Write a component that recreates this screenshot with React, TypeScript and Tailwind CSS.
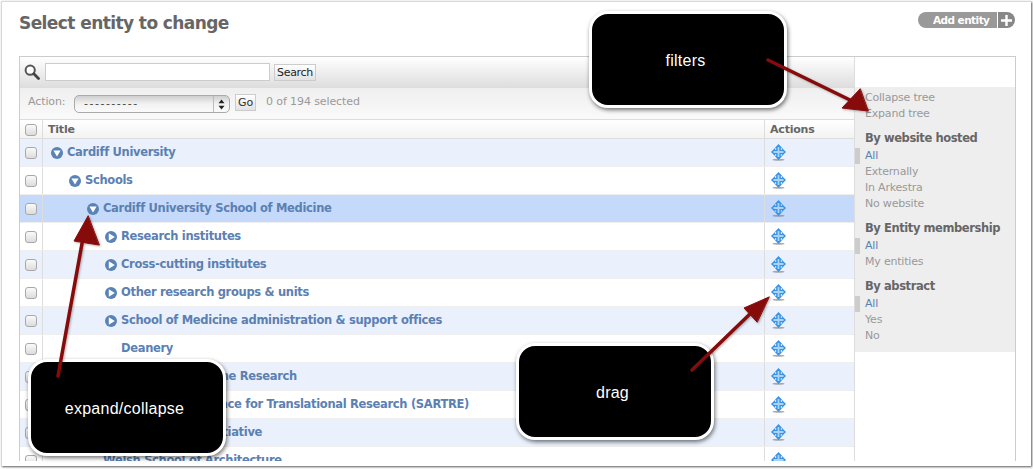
import React from 'react';

const FONT = "font-['DejaVu_Sans',sans-serif]";

type Row = { title: string; pad: number; icon?: 'down' | 'right'; active?: boolean };

const rows: Row[] = [
  { title: 'Cardiff University', pad: 8, icon: 'down' },
  { title: 'Schools', pad: 26, icon: 'down' },
  { title: 'Cardiff University School of Medicine', pad: 44, icon: 'down', active: true },
  { title: 'Research institutes', pad: 62, icon: 'right' },
  { title: 'Cross-cutting institutes', pad: 62, icon: 'right' },
  { title: 'Other research groups & units', pad: 62, icon: 'right' },
  { title: 'School of Medicine administration & support offices', pad: 62, icon: 'right' },
  { title: 'Deanery', pad: 78 },
  { title: 'Institute of Medicine Research', pad: 65 },
  { title: 'South Wales Alliance for Translational Research (SARTRE)', pad: 69 },
  { title: 'Wales Gene Park Initiative', pad: 56 },
  { title: 'Welsh School of Architecture', pad: 60 },
];

const Toggle = ({ dir }: { dir: 'down' | 'right' }) => (
  <svg width="12" height="12" viewBox="0 0 12 12" className="shrink-0 mr-[4px]">
    <circle cx="6" cy="6" r="6" fill="#5a83b5" />
    {dir === 'down' ? <path d="M2.4 3.6h7.2L6 9.6z" fill="#fff" /> : <path d="M3.8 2.2v7.6L9.8 6z" fill="#fff" />}
  </svg>
);

const DragIcon = () => (
  <svg width="15" height="17" viewBox="0 0 15 17">
    <ellipse cx="7.5" cy="15.8" rx="6" ry="1" fill="#777" opacity="0.6" />
    <path
      d="M7.5 0L11.4 4.2H9.8V5.7H11V3.9L15 8L11 12.1V10.3H9.8V11.8H11.4L7.5 16L3.6 11.8H5.2V10.3H4V12.1L0 8L4 3.9V5.7H5.2V4.2H3.6z"
      fill="#3a92e6"
    />
    <path d="M6.6 3h1.8v10H6.6zM2.5 7.1h10v1.8h-10z" fill="#a9d4f7" />
  </svg>
);

const Checkbox = () => (
  <span className="block w-[12px] h-[12px] rounded-[3px] border border-[#a8a8a8] bg-gradient-to-b from-[#fafafa] to-[#dcdcdc]" />
);

const FilterGroup = ({ title, items, className }: { title: string; items: string[]; className?: string }) => (
  <div className={className}>
    <div className="h-[16px] pl-[10px] text-[11.5px] leading-[16px] font-bold text-[#666] tracking-[-0.42px]">{title}</div>
    <ul className="mt-[2px]">
      {items.map((item, i) => (
        <li
          key={item}
          className={`h-[16px] text-[11px] leading-[16px] tracking-[-0.2px] ${
            i === 0 ? 'border-l-[5px] border-[#ccc] pl-[5px] text-[#5b80b2]' : 'pl-[10px] text-[#999]'
          }`}
        >
          {item}
        </li>
      ))}
    </ul>
  </div>
);

const Callout = ({ label, className }: { label: string; className: string }) => (
  <div
    className={`absolute w-[198px] h-[97px] box-border rounded-[19px] border-[3px] border-white bg-black flex items-center justify-center pr-[5px] pt-[2px] text-white text-[16px] tracking-[0.25px] font-['Liberation_Sans',sans-serif] shadow-[1px_2px_4px_rgba(0,0,0,0.55)] ${className}`}
  >
    {label}
  </div>
);

export default function App() {
  return (
    <div className={`relative w-[1033px] h-[469px] overflow-hidden bg-white ${FONT}`}>
      <div className="ml-[1px] mt-[1px] w-[1030px] h-[465px] box-border bg-white border-l border-t border-[#d8d8d8] shadow-[1px_1px_2px_rgba(0,0,0,0.65)] pl-[17px] pr-[16px]">
        <div className="flex items-start justify-between h-[54px]">
          <h1 className="mt-[9px] text-[17px] leading-[24px] font-bold text-[#666] tracking-[-0.58px]">Select entity to change</h1>
          <div className="mt-[10px] flex h-[16px] text-white text-[10.5px] leading-[16px] font-bold tracking-[-0.55px]">
            <span className="w-[79px] pl-[15px] bg-[#999] rounded-l-[8px]">Add entity</span>
            <span className="ml-[1px] w-[17px] bg-[#888] rounded-r-[8px] flex items-center justify-center">
              <svg width="13" height="13" viewBox="0 0 13 13"><path d="M5.3 1h2.4v4.3H12v2.4H7.7V12H5.3V7.7H1V5.3h4.3z" fill="#fff" /></svg>
            </span>
          </div>
        </div>

        <div className="flex w-[997px] h-[405px] box-border border border-b-0 border-[#ccc] overflow-hidden">
          <div className="w-[835px] shrink-0 border-r border-[#ddd]">
            <div className="h-[30px] flex items-center bg-gradient-to-b from-white to-[#dedede] pl-[4px]">
              <svg width="16" height="16" viewBox="0 0 16 16" className="mr-[5px]">
                <circle cx="6.2" cy="6.2" r="4.6" fill="#fff" stroke="#555" strokeWidth="2" />
                <path d="M9.8 9.8L14.5 14.5" stroke="#444" strokeWidth="2.8" strokeLinecap="round" />
              </svg>
              <span className="block w-[225px] h-[18px] bg-white border border-[#ccc]" />
              <span className="ml-[4px] h-[17px] w-[42px] border border-[#ccc] bg-gradient-to-b from-white to-[#e2e2e2] text-[11px] leading-[15px] text-center text-[#222] tracking-[-0.3px]">Search</span>
            </div>
            <div className="h-[32px] flex items-center bg-gradient-to-b from-[#efefef] to-[#fafafa] border-t border-[#ddd] pl-[8px] pb-[2px] text-[11px] text-[#999] tracking-[-0.1px]">
              <span className="w-[46px]">Action:</span>
              <span className="relative mt-[3px] w-[156px] h-[18px] rounded-[5px] border border-[#aaa] bg-gradient-to-b from-[#cfcfcf] via-[#f2f2f2] to-[#fafafa] text-[11px] leading-[16px] pl-[9px] text-[#444] tracking-[1.5px]">
                ----------
                <span className="absolute right-0 top-0 bottom-0 w-[16px] border-l border-[#bbb] flex items-center justify-center">
                  <svg width="7" height="11" viewBox="0 0 7 11"><path d="M3.5 0.5L6.5 4.3h-6zM3.5 10.5L0.5 6.7h6z" fill="#222" /></svg>
                </span>
              </span>
              <span className="ml-[5px] w-[21px] h-[17px] border border-[#ccc] bg-gradient-to-b from-white to-[#e2e2e2] text-[11px] leading-[15px] text-center text-[#333]">Go</span>
              <span className="ml-[10px]">0 of 194 selected</span>
            </div>
            <div className="h-[20px] flex border-y border-[#ddd] bg-gradient-to-b from-white to-[#f3f3f3] text-[11px] leading-[20px] font-bold text-[#666] tracking-[-0.2px]">
              <span className="w-[23px] shrink-0 border-r border-[#ddd] flex items-center justify-center pt-[1px]"><Checkbox /></span>
              <span className="flex-1 pl-[5px]">Title</span>
              <span className="w-[90px] shrink-0 border-l border-[#ddd] pl-[5px]">Actions</span>
            </div>
            {rows.map((row, i) => (
              <div
                key={row.title}
                className={`h-[28px] shrink-0 flex border-b border-[#eee] ${
                  row.active ? 'bg-[#c5dafb]' : i % 2 === 0 ? 'bg-[#eaf1fd]' : 'bg-white'
                }`}
              >
                <span className="w-[23px] shrink-0 border-r border-[#ddd] flex items-center justify-center"><Checkbox /></span>
                <span
                  style={{ paddingLeft: row.pad }}
                  className="flex-1 flex items-center text-[11.5px] font-bold text-[#5b80b2] tracking-[-0.32px] whitespace-nowrap overflow-hidden"
                >
                  {row.icon && <Toggle dir={row.icon} />}
                  {row.title}
                </span>
                <span className="w-[90px] shrink-0 border-l border-[#ddd] pl-[6px] flex items-center"><DragIcon /></span>
              </div>
            ))}
          </div>
          <div className="flex-1 pt-[30px]">
            <div className="h-[265px] bg-[#eee] pt-[3px]">
              <div className="pl-[10px] text-[11px] leading-[16px] text-[#999] tracking-[-0.2px]">
                <div>Collapse tree</div>
                <div>Expand tree</div>
              </div>
              <FilterGroup className="mt-[8px]" title="By website hosted" items={['All', 'Externally', 'In Arkestra', 'No website']} />
              <FilterGroup className="mt-[8px]" title="By Entity membership" items={['All', 'My entities']} />
              <FilterGroup className="mt-[8px]" title="By abstract" items={['All', 'Yes', 'No']} />
            </div>
          </div>
        </div>
      </div>

      <Callout label="filters" className="left-[589px] top-[11px]" />
      <Callout label="expand/collapse" className="left-[28px] top-[359px]" />
      <Callout label="drag" className="left-[516px] top-[343px]" />

      <svg className="absolute inset-0 pointer-events-none drop-shadow-[1px_1px_1px_rgba(0,0,0,0.3)]" width="1033" height="469" viewBox="0 0 1033 469">
        <g fill="#870b0b" stroke="#870b0b" strokeLinecap="round">
          <path d="M768 60L850 100" strokeWidth="3.5" fill="none" />
          <path d="M868 111L842 108L860 89z" strokeWidth="1" />
          <path d="M58 376L83 238" strokeWidth="3.5" fill="none" />
          <path d="M88 216L74 241L99 245z" strokeWidth="1" />
          <path d="M692 370L752 312" strokeWidth="3.5" fill="none" />
          <path d="M769 297L744 308L757 322z" strokeWidth="1" />
        </g>
      </svg>
    </div>
  );
}
